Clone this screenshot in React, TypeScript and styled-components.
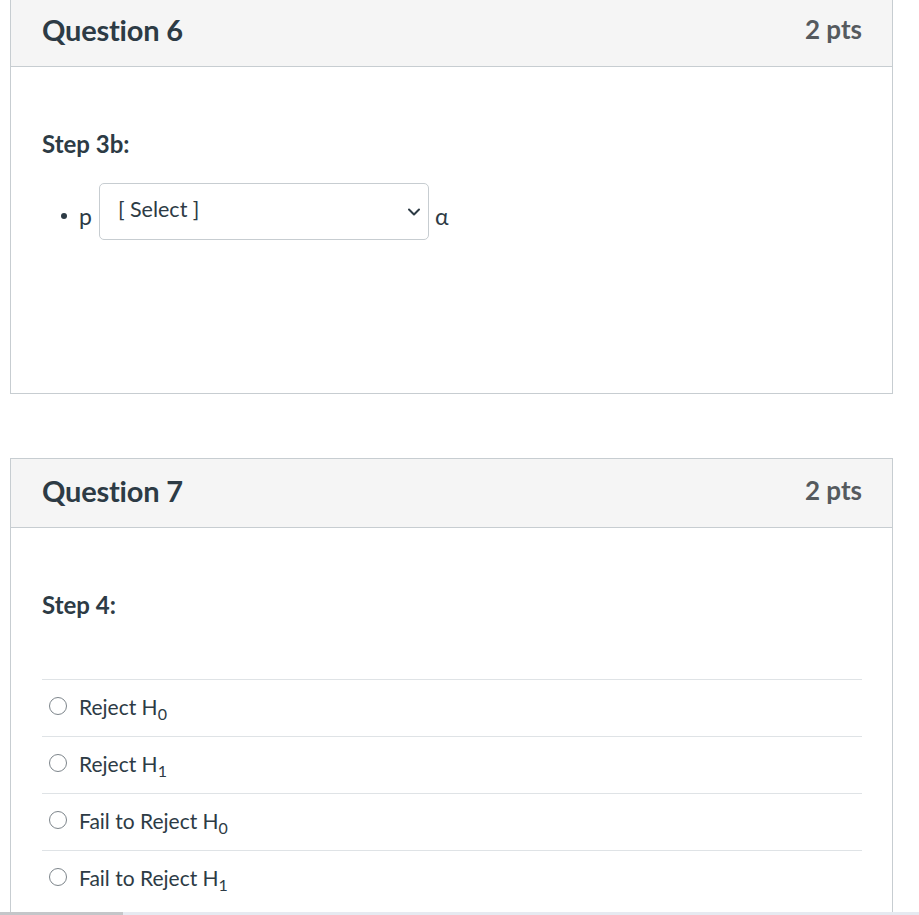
import React from "react";
import styled, { createGlobalStyle } from "styled-components";

const Global = createGlobalStyle`
  html, body { margin: 0; padding: 0; background: #fff; overflow: hidden; }
  body { font-family: Lato, "Noto Sans", "Liberation Sans", sans-serif; color: #2d3b45; }
`;

const Page = styled.div`
  display: flex;
  flex-direction: column;
  gap: 64px;
  padding: 0 26px 0 10px;
  margin-top: -3px;
`;

const Card = styled.section`
  border: 1px solid #c7cdd1;
  background: #fff;
`;

const Header = styled.header`
  display: flex;
  align-items: center;
  justify-content: space-between;
  box-sizing: border-box;
  height: 69px;
  padding: 0 30px 6px 31px;
  background: #f5f5f5;
  border-bottom: 1px solid #c7cdd1;
`;

const Title = styled.h2`
  margin: 0;
  font-size: 29px;
  font-weight: 700;
  letter-spacing: -0.2px;
  color: #2d3b45;
`;

const Points = styled.span`
  font-size: 26px;
  font-weight: 700;
  color: #555a5e;
`;

const Body = styled.div<{ $h?: number }>`
  display: flow-root;
  padding: 0 30px 40px 31px;
  ${(p) => (p.$h ? `height: ${p.$h}px;` : "")}
  box-sizing: border-box;
`;

const Step = styled.p<{ $top: number; $bottom: number }>`
  margin: ${(p) => p.$top}px 0 ${(p) => p.$bottom}px;
  font-size: 24px;
  font-weight: 700;
  line-height: 32px;
  color: #2d3b45;
`;

const BulletRow = styled.div`
  display: flex;
  align-items: center;
  padding-left: 19px;
  font-size: 23px;
`;

const Dot = styled.span`
  width: 6px;
  height: 6px;
  border-radius: 50%;
  background: #2d3b45;
  margin-right: 12px;
  margin-top: 8px;
`;

const Sym = styled.span`
  margin-top: 10px;
  line-height: 1;
`;

const SelectBox = styled.div`
  display: flex;
  align-items: center;
  justify-content: space-between;
  box-sizing: border-box;
  width: 330px;
  height: 57px;
  margin: 0 6px 0 7px;
  padding: 0 7px 6px 18px;
  border: 1px solid #c7cdd1;
  border-radius: 5px;
  background: #fff;
  font-size: 21.5px;
  color: #2d3b45;
`;

const Chevron = styled.svg`
  width: 14px;
  height: 14px;
  margin-top: 6px;
`;

const Options = styled.div`
  display: flex;
  flex-direction: column;
`;

const Option = styled.label`
  display: flex;
  align-items: center;
  box-sizing: border-box;
  height: 57px;
  padding-bottom: 4px;
  border-top: 1px solid #dfe3e6;
  font-size: 21px;
  color: #2d3b45;
`;

const Radio = styled.span`
  box-sizing: border-box;
  width: 18px;
  height: 18px;
  border-radius: 50%;
  border: 1px solid #7d858b;
  margin: 0 12px 0 7px;
  background: #fff;
`;

const Sub = styled.sub`
  font-size: 16px;
  vertical-align: -5px;
  line-height: 0;
`;

const ScrollStrip = styled.div`
  position: fixed;
  left: 0;
  right: 0;
  bottom: 0;
  height: 3px;
  display: flex;
  background: #e6eaf1;
`;

const ScrollThumb = styled.div`
  width: 123px;
  background: #c4c6c9;
`;

const options: [string, string][] = [
  ["Reject H", "0"],
  ["Reject H", "1"],
  ["Fail to Reject H", "0"],
  ["Fail to Reject H", "1"],
];

export default function App() {
  return (
    <>
      <Global />
      <Page>
        <Card>
          <Header>
            <Title>Question 6</Title>
            <Points>2 pts</Points>
          </Header>
          <Body $h={326}>
            <Step $top={61} $bottom={23}>Step 3b:</Step>
            <BulletRow>
              <Dot />
              <Sym>p</Sym>
              <SelectBox>
                <span>[ Select ]</span>
                <Chevron viewBox="0 0 14 14" fill="none">
                  <path d="M2 4.5 L7 9.5 L12 4.5" stroke="#2d3b45" strokeWidth="2" strokeLinecap="round" strokeLinejoin="round" />
                </Chevron>
              </SelectBox>
              <Sym>α</Sym>
            </BulletRow>
          </Body>
        </Card>
        <Card>
          <Header>
            <Title>Question 7</Title>
            <Points>2 pts</Points>
          </Header>
          <Body>
            <Step $top={61} $bottom={58}>Step 4:</Step>
            <Options>
              {options.map(([t, s], i) => (
                <Option key={i}>
                  <Radio />
                  <span>
                    {t}
                    <Sub>{s}</Sub>
                  </span>
                </Option>
              ))}
            </Options>
          </Body>
        </Card>
      </Page>
      <ScrollStrip>
        <ScrollThumb />
      </ScrollStrip>
    </>
  );
}
